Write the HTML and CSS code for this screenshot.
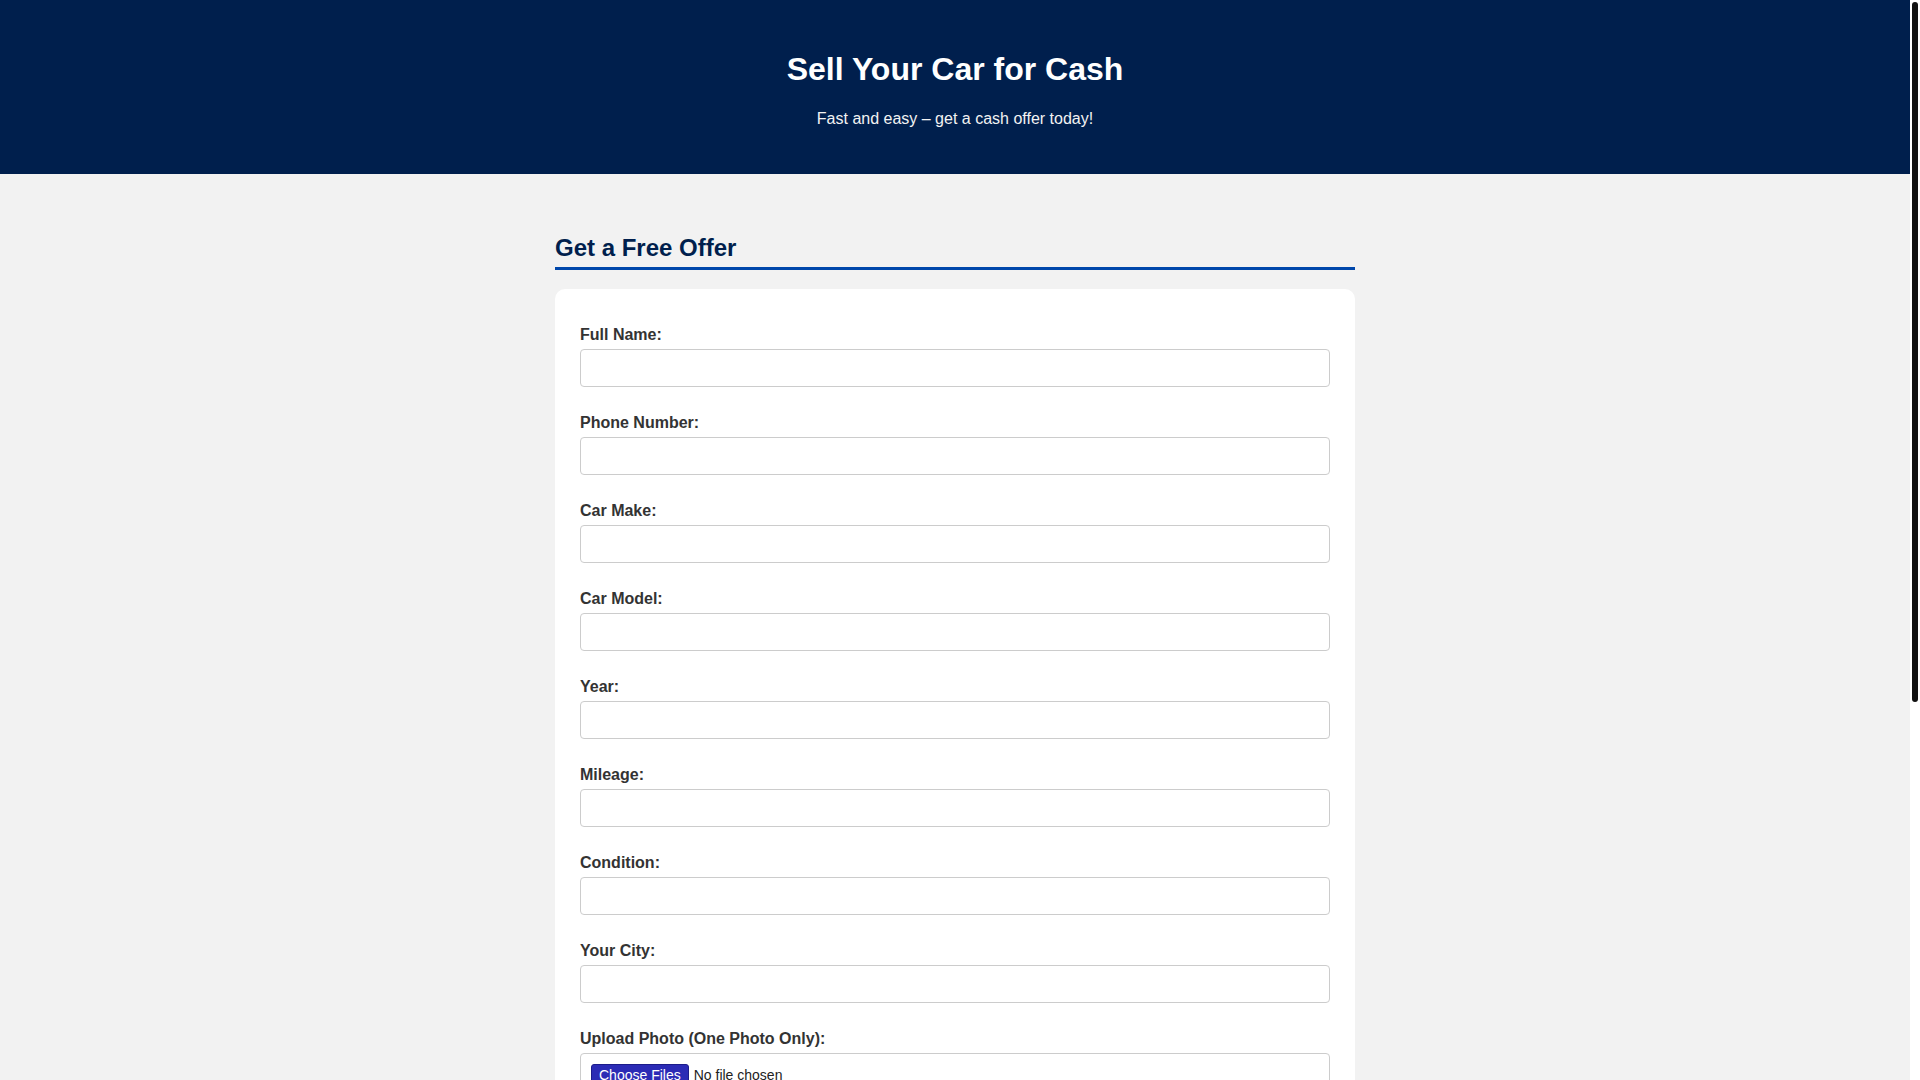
FILE: index.html
```html
<!DOCTYPE html>
<html lang="en">
<head>
<meta charset="utf-8">
<title>Sell Your Car for Cash</title>
<link rel="stylesheet" href="styles.css">
</head>
<body>
<header class="site-header">
  <h1 class="site-title">Sell Your Car for Cash</h1>
  <p class="site-tagline">Fast and easy – get a cash offer today!</p>
</header>
<main class="container">
  <h2 class="section-title">Get a Free Offer</h2>
  <form class="form-card">
    <div class="field"><label class="field-label" for="name">Full Name:</label><input class="text-input" type="text" id="name"></div>
    <div class="field"><label class="field-label" for="phone">Phone Number:</label><input class="text-input" type="tel" id="phone"></div>
    <div class="field"><label class="field-label" for="make">Car Make:</label><input class="text-input" type="text" id="make"></div>
    <div class="field"><label class="field-label" for="model">Car Model:</label><input class="text-input" type="text" id="model"></div>
    <div class="field"><label class="field-label" for="year">Year:</label><input class="text-input" type="text" id="year"></div>
    <div class="field"><label class="field-label" for="mileage">Mileage:</label><input class="text-input" type="text" id="mileage"></div>
    <div class="field"><label class="field-label" for="condition">Condition:</label><input class="text-input" type="text" id="condition"></div>
    <div class="field"><label class="field-label" for="city">Your City:</label><input class="text-input" type="text" id="city"></div>
    <div class="field"><label class="field-label" for="photo">Upload Photo (One Photo Only):</label><input class="file-input" type="file" id="photo" multiple></div>
    <div class="field"><label class="field-label" for="notes">Additional Notes:</label><textarea class="text-area" id="notes"></textarea></div>
    <button class="submit-btn" type="submit">Get My Offer</button>
  </form>
  <h2 class="section-title">Why Sell to Us?</h2>
  <ul class="benefits">
    <li>Instant cash offers</li>
    <li>Free pickup and towing</li>
    <li>We buy cars in any condition</li>
    <li>No hidden fees</li>
  </ul>
</main>
<footer class="site-footer">
  <p class="footer-text">© 2024 Sell Your Car for Cash. All rights reserved.</p>
</footer>
<div class="scrollbar" aria-hidden="true"><div class="scrollbar-thumb"></div></div>
</body>
</html>
```
FILE: styles.css
```css
html {
  background: #f2f2f2;
  scrollbar-width: none;
}
body {
  margin: 0 10px 0 0;
  background: #f2f2f2;
  font-family: "Liberation Sans", Arial, sans-serif;
  color: #333;
}
.scrollbar {
  position: fixed;
  top: 0;
  right: 0;
  width: 10px;
  height: 100vh;
  background: #fff;
}
.scrollbar-thumb {
  margin: 2px 2px 0;
  height: 700px;
  background: #111;
  border-radius: 3px;
}
.site-header {
  background: #001f4d;
  color: #fff;
  text-align: center;
  padding: 30px 20px;
}
.site-title {
  font-size: 32px;
  font-weight: bold;
  margin: 21.44px 0 22px;
}
.site-tagline {
  font-size: 16px;
  margin: 16px 0;
  color: #f2f2f2;
}
.container {
  max-width: 800px;
  margin: 0 auto;
  padding: 40px 0;
}
.section-title {
  font-size: 24px;
  font-weight: bold;
  color: #001f4d;
  margin: 19.92px 0 19px;
  padding-bottom: 5px;
  border-bottom: 3px solid #0047ab;
}
.form-card {
  background: #fff;
  border-radius: 10px;
  padding: 37px 25px 25px;
  display: flex;
  flex-direction: column;
  gap: 27px;
}
.field {
  display: flex;
  flex-direction: column;
  gap: 5px;
}
.field-label {
  font-size: 16px;
  font-weight: bold;
  color: #333;
}
.text-input,
.file-input,
.text-area {
  box-sizing: border-box;
  width: 100%;
  padding: 10px;
  border: 1px solid #ccc;
  border-radius: 4px;
  font-family: "Liberation Sans", Arial, sans-serif;
  font-size: 14px;
  background: #fff;
  margin: 0;
}
.file-input {
  color: #222;
}
.file-input::file-selector-button {
  background: #2b2bb5;
  color: #fff;
  border: 1px solid #1c1c8a;
  border-radius: 3px;
  padding: 2px 7px;
  margin-right: 5px;
  font-family: "Liberation Sans", Arial, sans-serif;
  font-size: 14px;
}
.text-area {
  height: 100px;
  resize: vertical;
}
.submit-btn {
  background: #0047ab;
  color: #fff;
  border: none;
  border-radius: 5px;
  padding: 12px;
  font-size: 18px;
  font-weight: bold;
  font-family: "Liberation Sans", Arial, sans-serif;
}
.benefits {
  margin: 0;
  padding-left: 20px;
  font-size: 16px;
  line-height: 1.6;
}
.site-footer {
  background: #001f4d;
  color: #fff;
  text-align: center;
  padding: 20px;
}
.footer-text {
  margin: 0;
  font-size: 14px;
}
```
